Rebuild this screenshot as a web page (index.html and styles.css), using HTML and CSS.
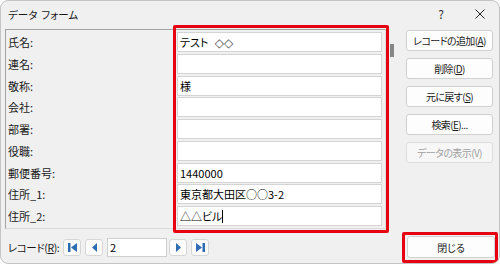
FILE: index.html
```html
<!DOCTYPE html>
<html lang="ja">
<head>
  <meta charset="UTF-8">
  <title>データ フォーム</title>
  <link rel="stylesheet" href="styles.css">
</head>
<body>

  <div class="window">
    <div class="titlebar">
      <span class="title">データ<span class="gap"></span>フォーム</span>
      <span class="help">?</span>
      <svg class="close-x" width="10" height="10" viewBox="0 0 10 10">
        <path d="M0.5 0.5 L9.5 9.5 M9.5 0.5 L0.5 9.5" stroke="#222" stroke-width="1" fill="none"/>
      </svg>
    </div>

    <div class="main">
      <!-- レコードの項目 -->
      <div class="panel">
        <label>氏名:</label>
        <div class="field">テスト <span class="shape">◇◇</span></div>
        <label>連名:</label>
        <div class="field"></div>
        <label>敬称:</label>
        <div class="field">様</div>
        <label>会社:</label>
        <div class="field"></div>
        <label>部署:</label>
        <div class="field"></div>
        <label>役職:</label>
        <div class="field"></div>
        <label>郵便番号:</label>
        <div class="field">1440000</div>
        <label>住所_1:</label>
        <div class="field">東京都大田区○○3-2</div>
        <label>住所_2:</label>
        <div class="field">△△ビル<span class="caret"></span></div>
      </div>

      <div class="scroll">
        <div class="thumb"></div>
      </div>

      <div class="actions">
        <button>レコードの追加(<u>A</u>)</button>
        <button>削除(<u>D</u>)</button>
        <button>元に戻す(<u>S</u>)</button>
        <button>検索(<u>E</u>)...</button>
        <button class="disabled">データの表示(V)</button>
      </div>
    </div>

    <div class="footer">
      <span class="record-label">レコード(<u>R</u>):</span>
      <button class="nav">
        <svg width="9" height="9" viewBox="0 0 9 9"><rect x="0" y="0" width="2.5" height="9" fill="#2f6db3"/><path d="M9 0 L3 4.5 L9 9 Z" fill="#2f6db3"/></svg>
      </button>
      <button class="nav">
        <svg width="9" height="9" viewBox="0 0 9 9"><path d="M7 0 L2 4.5 L7 9 Z" fill="#2f6db3"/></svg>
      </button>
      <div class="record-no">2</div>
      <button class="nav next">
        <svg width="9" height="9" viewBox="0 0 9 9"><path d="M2 0 L7 4.5 L2 9 Z" fill="#2f6db3"/></svg>
      </button>
      <button class="nav">
        <svg width="9" height="9" viewBox="0 0 9 9"><path d="M0 0 L6 4.5 L0 9 Z" fill="#2f6db3"/><rect x="6.5" y="0" width="2.5" height="9" fill="#2f6db3"/></svg>
      </button>
      <button class="close-btn">閉じる</button>
    </div>

    <!-- 強調の赤枠 -->
    <div class="highlight fields-mark"></div>
    <div class="highlight close-mark"></div>
  </div>

</body>
</html>
```

FILE: styles.css
```css
* {
  box-sizing: border-box;
}

body {
  margin: 0;
  background: #ffffff;
  font-family: "Noto Sans CJK JP", "Noto Sans", sans-serif;
  font-size: 11px;
  font-feature-settings: "palt";
  color: #1a1a1a;
}

.window {
  position: relative;
  width: 500px;
  height: 264px;
  background: #f0f0f0;
  border: 1px solid #c4c4c4;
  border-radius: 8px;
  overflow: hidden;
}

.titlebar {
  height: 28px;
  display: flex;
  align-items: center;
  padding-left: 7px;
}

.title {
  flex: 1;
  font-size: 10.5px;
  margin-top: -2px;
  white-space: nowrap;
}

.title .gap {
  display: inline-block;
  width: 4px;
}

.help {
  font-size: 12px;
  margin-right: 31px;
  margin-top: -3px;
  color: #333;
}

.close-x {
  margin-right: 14px;
  margin-top: -3px;
}

.main {
  display: flex;
  padding-left: 4px;
}

.panel {
  width: 381px;
  height: 200px;
  border: 1px solid;
  border-color: #a3a3a3 #dcdcdc #dcdcdc #a3a3a3;
  padding: 2px 3px 0 2px;
  display: grid;
  grid-template-columns: 169px 205px;
  grid-auto-rows: 20px;
  row-gap: 1.75px;
  align-items: center;
}

.panel label {
  font-size: 11px;
  white-space: nowrap;
}

.field {
  height: 20px;
  background: #ffffff;
  border: 1px solid #d4d4d4;
  padding: 0 2px;
  line-height: 18px;
  font-size: 11px;
  color: #000;
  white-space: nowrap;
}

.shape {
  font-family: "DejaVu Sans", sans-serif;
  font-size: 12px;
  color: #555;
  margin-left: 4px;
}

.caret {
  display: inline-block;
  width: 1px;
  height: 13px;
  background: #000;
  vertical-align: -2px;
}

.scroll {
  width: 20px;
}

.thumb {
  width: 4px;
  height: 13px;
  margin: 15px 0 0 4px;
  background: #868686;
}

.actions {
  display: flex;
  flex-direction: column;
  gap: 7px;
  margin-top: 1px;
}

.actions button, .close-btn {
  width: 87px;
  height: 21px;
  padding: 0;
  background: #fdfdfd;
  border: 1px solid #d0d0d0;
  border-radius: 3px;
  font-family: inherit;
  font-size: 10px;
  letter-spacing: -0.6px;
  font-feature-settings: "palt";
  color: #1a1a1a;
  white-space: nowrap;
}

.actions button.disabled {
  color: #a0a0a0;
  background: #f7f7f7;
  border-color: #dedede;
}

.footer {
  display: flex;
  align-items: center;
  height: 22px;
  margin-top: 7px;
  padding-left: 7px;
}

.record-label {
  width: 55px;
  margin-top: 1px;
  font-size: 10.5px;
  letter-spacing: -0.4px;
  white-space: nowrap;
}

.nav {
  width: 18px;
  height: 17px;
  margin-right: 4px;
  padding: 0;
  background: #fbfbfb;
  border: 1px solid #d6d6d6;
  border-radius: 3px;
  display: flex;
  align-items: center;
  justify-content: center;
}

.record-no {
  width: 60px;
  height: 19px;
  background: #ffffff;
  border: 1px solid #cfcfcf;
  padding-left: 2px;
  line-height: 17px;
  margin-right: 2px;
  color: #000;
}

.close-btn {
  margin-left: auto;
  margin-right: 4px;
  width: 88px;
  height: 22px;
  letter-spacing: 0;
}

.highlight {
  position: absolute;
  border: 3px solid #e60012;
  border-radius: 2px;
}

.fields-mark {
  left: 172px;
  top: 24px;
  width: 216px;
  height: 208px;
}

.close-mark {
  left: 401px;
  top: 231px;
  width: 96px;
  height: 31px;
}
```
